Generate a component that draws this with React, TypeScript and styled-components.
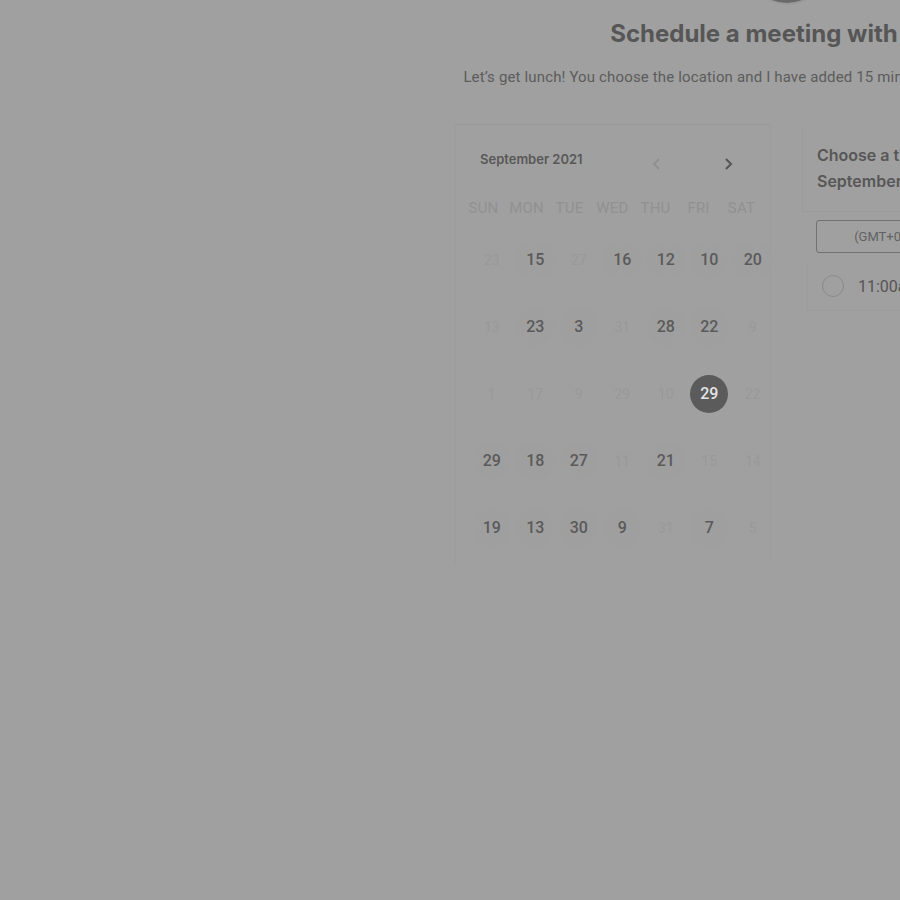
import React from "react";
import styled, { createGlobalStyle } from "styled-components";

const Global = createGlobalStyle`
  html, body { margin: 0; padding: 0; background: #a0a0a0; overflow: hidden; }
  body { font-family: Roboto, "Liberation Sans", sans-serif; }
`;

const Page = styled.div`
  width: 900px;
  height: 900px;
  overflow: hidden;
  background: #a0a0a0;
`;

const Column = styled.div`
  margin-left: 455px;
  width: 664px;
  display: flex;
  flex-direction: column;
  align-items: center;
`;

const Avatar = styled.div`
  width: 80px;
  height: 80px;
  border-radius: 50%;
  background: #6a6a6a;
  margin-top: -77px;
  box-shadow: 0 0 0 2px #9a9a9a;
`;

const Title = styled.h1`
  margin: 16px 0 0;
  font-family: Inter, "Liberation Sans", sans-serif;
  font-size: 24px;
  font-weight: 700;
  line-height: 30px;
  color: #565656;
  white-space: nowrap;
`;

const Subtitle = styled.p`
  margin: 18px 0 0;
  font-size: 15px;
  letter-spacing: 0.15px;
  line-height: 20px;
  color: #5c5c5c;
  white-space: nowrap;
`;

const Panels = styled.div`
  margin-top: 37px;
  width: 100%;
  display: flex;
  gap: 31px;
  align-items: flex-start;
`;

const Calendar = styled.div`
  width: 316px;
  height: 440px;
  box-sizing: border-box;
  border-top: 1px solid #9a9a9a;
  border-left: 1px solid #9c9c9c;
  border-right: 1px solid #9c9c9c;
`;

const CalHeader = styled.div`
  display: flex;
  align-items: flex-start;
  height: 73px;
  padding: 0 0 0 24px;
`;

const MonthLabel = styled.div`
  font-family: Inter, "Liberation Sans", sans-serif;
  font-size: 13px;
  font-weight: 600;
  line-height: 16px;
  color: #585858;
  width: 170px;
  margin-top: 26px;
`;

const Chevron = styled.svg<{ $muted?: boolean }>`
  width: 14px;
  height: 14px;
  margin-top: 32px;
  fill: none;
  stroke: ${(p) => (p.$muted ? "#909090" : "#555")};
  stroke-width: 2;
  margin-left: ${(p) => (p.$muted ? "0" : "57px")};
`;

const WeekRow = styled.div`
  display: grid;
  grid-template-columns: repeat(7, 43px);
  padding-left: 6px;
  height: 20px;
  align-items: center;
`;

const WeekDay = styled.div`
  text-align: center;
  font-size: 15px;
  color: #919191;
  letter-spacing: 0.2px;
`;

const DateGrid = styled.div`
  margin-top: 8px;
  display: grid;
  grid-template-columns: repeat(7, 43.5px);
  grid-auto-rows: 67px;
  padding-left: 14px;
`;

const Cell = styled.div`
  display: flex;
  align-items: center;
  justify-content: center;
`;

const Day = styled.div<{ $state: "off" | "on" | "sel" }>`
  width: 38px;
  height: 38px;
  border-radius: 50%;
  display: flex;
  align-items: center;
  justify-content: center;
  font-size: ${(p) => (p.$state === "off" ? "14px" : "16px")};
  font-weight: ${(p) => (p.$state === "off" ? 400 : 500)};
  color: ${(p) => (p.$state === "off" ? "#999999" : p.$state === "sel" ? "#e4e4e4" : "#5a5a5a")};
  background: ${(p) => (p.$state === "sel" ? "#5b5b5b" : p.$state === "on" ? "#9f9f9f" : "transparent")};
`;

const Side = styled.div`
  width: 316px;
  display: flex;
  flex-direction: column;
`;

const SideHead = styled.div`
  margin-top: 3px;
  height: 85px;
  box-sizing: border-box;
  border-left: 1px solid #9b9b9b;
  border-bottom: 1px solid #9b9b9b;
  padding: 15px 0 0 14px;
  font-family: Inter, "Liberation Sans", sans-serif;
  font-size: 16px;
  font-weight: 600;
  line-height: 26px;
  color: #575757;
  white-space: nowrap;
`;

const Tz = styled.div`
  margin: 8px 0 0 14px;
  height: 33px;
  box-sizing: border-box;
  border: 1px solid #727272;
  border-radius: 3px;
  display: flex;
  align-items: center;
  justify-content: center;
  font-size: 13px;
  color: #626262;
  white-space: nowrap;
`;

const Slots = styled.div`
  margin: 9px 0 0 5px;
  border-left: 1px solid #9c9c9c;
  border-bottom: 1px solid #9c9c9c;
  height: 48px;
  display: flex;
  align-items: center;
  padding-left: 14px;
  gap: 14px;
`;

const Radio = styled.div`
  width: 22px;
  height: 22px;
  border-radius: 50%;
  border: 1px solid #8a8a8a;
  box-sizing: border-box;
`;

const SlotText = styled.div`
  font-size: 16px;
  color: #555;
  white-space: nowrap;
`;

type S = "off" | "on" | "sel";
const rows: [string, S][][] = [
  [["23", "off"], ["15", "on"], ["27", "off"], ["16", "on"], ["12", "on"], ["10", "on"], ["20", "on"]],
  [["13", "off"], ["23", "on"], ["3", "on"], ["31", "off"], ["28", "on"], ["22", "on"], ["9", "off"]],
  [["1", "off"], ["17", "off"], ["9", "off"], ["29", "off"], ["10", "off"], ["29", "sel"], ["22", "off"]],
  [["29", "on"], ["18", "on"], ["27", "on"], ["11", "off"], ["21", "on"], ["15", "off"], ["14", "off"]],
  [["19", "on"], ["13", "on"], ["30", "on"], ["9", "on"], ["31", "off"], ["7", "on"], ["5", "off"]],
];

const days = ["SUN", "MON", "TUE", "WED", "THU", "FRI", "SAT"];

export default function App() {
  return (
    <Page>
      <Global />
      <Column>
        <Avatar />
        <Title>Schedule a meeting with Mark</Title>
        <Subtitle>
          Let’s get lunch! You choose the location and I have added 15 minutes of extra time for all travel.
        </Subtitle>
        <Panels>
          <Calendar>
            <CalHeader>
              <MonthLabel>September 2021</MonthLabel>
              <Chevron $muted viewBox="0 0 14 14">
                <path d="M9 2 L4 7 L9 12" />
              </Chevron>
              <Chevron viewBox="0 0 14 14">
                <path d="M5 2 L10 7 L5 12" />
              </Chevron>
            </CalHeader>
            <WeekRow>
              {days.map((d) => (
                <WeekDay key={d}>{d}</WeekDay>
              ))}
            </WeekRow>
            <DateGrid>
              {rows.flat().map(([n, s], i) => (
                <Cell key={i}>
                  <Day $state={s}>{n}</Day>
                </Cell>
              ))}
            </DateGrid>
          </Calendar>
          <Side>
            <SideHead>
              Choose a time on
              <br />
              September 29, 2021
            </SideHead>
            <Tz>(GMT+08:00) Singapore Standard Time</Tz>
            <Slots>
              <Radio />
              <SlotText>11:00am</SlotText>
            </Slots>
          </Side>
        </Panels>
      </Column>
    </Page>
  );
}
